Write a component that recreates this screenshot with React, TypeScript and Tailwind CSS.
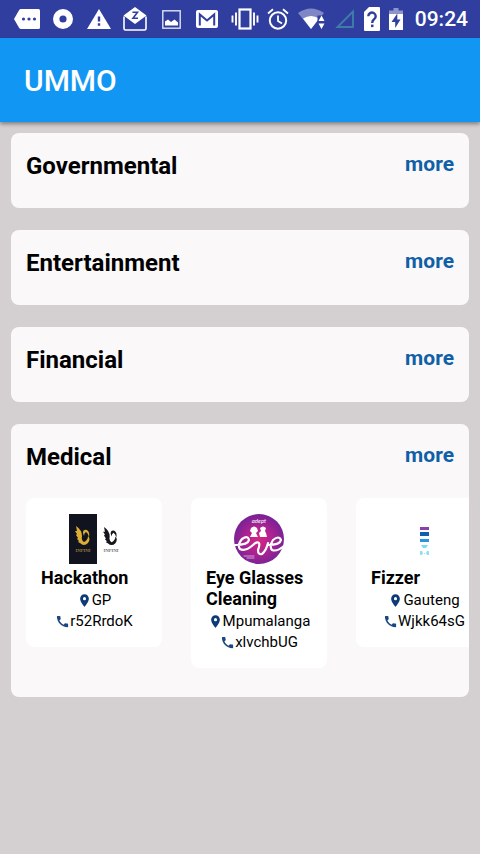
import type { ReactNode } from "react";
import { MdCall, MdLocationOn } from "react-icons/md";

function NotificationIcons() {
  return (
    <div className="flex items-center">
      <span className="flex w-9 justify-center">
        <svg width="26" height="20" viewBox="0 0 26 20" aria-label="More notifications">
          <path d="M7 0H24.500Q26 0 26 1.500V18.500Q26 20 24.500 20H7Q5.800 20 5.200 19L0 10 5.200 1Q5.800 0 7 0Z" fill="#fff" />
          <g fill="#303f9f">
            <circle cx="9.500" cy="10" r="1.600" />
            <circle cx="15" cy="10" r="1.600" />
            <circle cx="20.500" cy="10" r="1.600" />
          </g>
        </svg>
      </span>
      <span className="flex w-9 justify-center">
        <svg width="20" height="20" viewBox="0 0 20 20" aria-label="Recording">
          <circle cx="10" cy="10" r="6.800" fill="none" stroke="#fff" strokeWidth="6.400" />
        </svg>
      </span>
      <span className="flex w-9 justify-center">
        <svg width="24" height="20" viewBox="0 0 24 20" aria-label="Warning">
          <path d="M12 0 24 20H0Z" fill="#fff" />
          <path d="M10.800 7.500h2.400v5h-2.400zM10.800 14.300h2.400v2.400h-2.400z" fill="#303f9f" />
        </svg>
      </span>
      <span className="flex w-9 justify-center">
        <svg width="24" height="24" viewBox="0 0 24 24" aria-label="Mail">
          <path d="M1 9.500V21.500Q1 23 2.500 23H21.500Q23 23 23 21.500V9.500" fill="none" stroke="#fff" strokeWidth="1.600" />
          <path d="M12 0 23.500 8.500 12 17 .5 8.500Z" fill="#fff" />
          <path d="M9.500 5.200h5L10 11.300h5" fill="none" stroke="#303f9f" strokeWidth="1.600" />
        </svg>
      </span>
      <span className="flex w-9 justify-center">
        <svg width="19" height="19" viewBox="0 0 19 19" aria-label="Screenshot">
          <rect x=".8" y=".8" width="17.400" height="17.400" fill="none" stroke="#dfe2f4" strokeWidth="1.400" />
          <path d="M3 15.500v-4l3-2 3 2.500 3.500-2.500 3.500 3v3Z" fill="#fff" />
        </svg>
      </span>
      <span className="flex w-9 justify-center">
        <svg width="22" height="18" viewBox="0 0 22 18" aria-label="Gmail">
          <rect width="22" height="18" rx="2" fill="#fff" />
          <path d="M3.800 15.500V4.500L11 10.500 18.200 4.500V15.500" fill="none" stroke="#303f9f" strokeWidth="2" />
        </svg>
      </span>
    </div>
  );
}

function SystemIcons() {
  return (
    <div className="flex items-center gap-2">
      <svg width="28" height="22" viewBox="0 0 28 22" aria-label="Vibrate">
        <rect x="8.500" y="1.500" width="11" height="19" fill="none" stroke="#fff" strokeWidth="2.200" />
        <path d="M5 4.500v13M23 4.500v13M1.500 7.500v7M26.500 7.500v7" stroke="#fff" strokeWidth="1.900" />
      </svg>
      <svg width="22" height="22" viewBox="0 0 22 22" aria-label="Alarm">
        <circle cx="11" cy="12.500" r="8.200" fill="none" stroke="#fff" strokeWidth="2" />
        <path d="M11 7.500v5.500l4 2.500M1 5.500 6 1.300M21 5.500 16 1.300" fill="none" stroke="#fff" strokeWidth="1.800" />
      </svg>
      <svg width="30" height="22" viewBox="0 0 30 22" aria-label="Wi-Fi">
        <path d="M1 5Q14-4 27 5L14 21Z" fill="#7f88c5" />
        <path d="M6 10.500Q14 5.500 22 10.500L14 21Z" fill="#fff" />
        <path d="M20.500 7.500H29V22h-8.500z" fill="#303f9f" />
        <path d="M24.500 7.500 27.500 13h-6ZM24.500 21 27.500 15.500h-6Z" fill="#fff" />
      </svg>
      <svg width="20" height="20" viewBox="0 0 20 20" aria-label="No signal">
        <path d="M18 2.500V18H2.500Z" fill="none" stroke="#3f7da8" strokeWidth="1.900" />
      </svg>
      <svg width="18" height="24" viewBox="0 0 18 24" aria-label="Unknown SIM card">
        <path d="M6 0H16Q17 0 17 1V23Q17 24 16 24H2Q1 24 1 23V5Z" fill="#fff" />
        <path d="M5.300 9.300a3.700 3.700 0 1 1 5.800 3Q9.200 13.600 9.200 15.900" fill="none" stroke="#303f9f" strokeWidth="2.400" />
        <path d="M8 17.600h2.500v2.500H8z" fill="#303f9f" />
      </svg>
      <svg width="14" height="22" viewBox="0 0 14 22" aria-label="Battery charging">
        <path d="M4.500 0h5v2.500H14V7H0V2.500h4.500Z" fill="#8d95cc" />
        <path d="M0 6h14v16H0z" fill="#fff" />
        <path d="M8.300 5.500 2.500 14h3.700v6L11.500 11.500H8.300Z" fill="#303f9f" />
      </svg>
    </div>
  );
}

function HackathonLogo() {
  const bird = (
    <>
      <path d="M0 0Q6 4 6 10Q5 14 8 16Q12 14 12 10Q15 13 12 17Q8 21 4 17L2 16L3 15L1 13L2 12L0 9L1 8L-1 5L1 5Z" />
      <path d="M7 7Q7 3 11 4Q14 6 13 11Q12 7 10 6Q8 7 8 10Z" />
    </>
  );
  return (
    <svg width="50" height="50" viewBox="0 0 50 50" aria-label="Hackathon logo">
      <rect width="28" height="50" fill="#11131f" />
      <g transform="translate(7 12)" fill="#dcae35">{bird}</g>
      <g transform="translate(35 13) scale(.95)" fill="#17171b">{bird}</g>
      <g fontFamily="Liberation Serif, serif" fontSize="5" textAnchor="middle">
        <text x="14" y="38" fill="#c7a24b">INFINI</text>
        <text x="42" y="38" fill="#333">INFINI</text>
      </g>
    </svg>
  );
}

function EveLogo() {
  return (
    <svg width="52" height="50" viewBox="0 0 52 50" aria-label="Eve logo">
      <defs>
        <radialGradient id="eve-disc" cx=".5" cy=".52" r=".5">
          <stop offset="0" stopColor="#d52682" />
          <stop offset=".5" stopColor="#b02291" />
          <stop offset="1" stopColor="#7b2296" />
        </radialGradient>
      </defs>
      <circle cx="26" cy="25" r="25" fill="url(#eve-disc)" />
      <g fill="#fff">
        <path d="M18 14q3-3 6 0l1 3-2 2 2 4h-8l2-4-2-2ZM27 14q3-3 6 0l-1 3 1 2 1 4h-7l-1-4 2-2Z" />
        <text x="26" y="9" fontFamily="Lato, sans-serif" fontStyle="italic" fontSize="6" textAnchor="middle">adept</text>
      </g>
      <g fill="none" stroke="#fff" strokeWidth="2.200" strokeLinecap="round">
        <path d="M2 31Q15 31 16 26Q15 21 9 25Q4 31 7 35Q12 38 20 31Q24 27 26 29Q27 31 25 36Q25 41 29 40Q33 37 35 29" />
        <path d="M35 31Q47 31 48 26Q46 21 40 26Q36 32 39 36Q44 38 51 32" />
        <path d="M11 42h10M14 44h7" strokeWidth=".6" />
      </g>
    </svg>
  );
}

function FizzerLogo() {
  return (
    <svg width="10" height="50" viewBox="0 0 10 50" aria-label="Fizzer logo">
      <path d="M1 13h9v3H1z" fill="#8b3eae" />
      <path d="M1 18h9v4H1z" fill="#1160ae" />
      <path d="M1 25h9v3H1z" fill="#2b94db" />
      <path d="M2 31h7l-2 3H4z" fill="#7bdcf0" />
      <path d="M1 37h2l1 2-1 2H1zM8 37h2v4H8l-1-2z" fill="#91dff2" />
      <path d="M5 39h1v1H5z" fill="#91dff2" />
    </svg>
  );
}

type Provider = { name: string; place: string; contact: string; logo: ReactNode };
type Category = { title: string; providers: Provider[] };

const categories: Category[] = [
  { title: "Governmental", providers: [] },
  { title: "Entertainment", providers: [] },
  { title: "Financial", providers: [] },
  {
    title: "Medical",
    providers: [
      { name: "Hackathon", place: "GP", contact: "r52RrdoK", logo: <HackathonLogo /> },
      { name: "Eye Glasses Cleaning", place: "Mpumalanga", contact: "xlvchbUG", logo: <EveLogo /> },
      { name: "Fizzer", place: "Gauteng", contact: "Wjkk64sG", logo: <FizzerLogo /> },
    ],
  },
];

function ProviderCard({ name, place, contact, logo }: Provider) {
  return (
    <li className="w-34 shrink-0 rounded-lg bg-white px-[15px] pt-4 pb-[15px]">
      <div className="flex h-[50px] justify-center">{logo}</div>
      <h3 className="mt-[3px] mb-0.5 text-lg leading-[21px] font-bold">{name}</h3>
      <p className="flex items-center justify-center text-[15px] leading-[21px]">
        <MdLocationOn size={15} className="shrink-0 text-[#0d3b78]" />
        {place}
      </p>
      <p className="flex items-center justify-center text-[15px] leading-[21px]">
        <MdCall size={15} className="shrink-0 text-[#1c4680]" />
        {contact}
      </p>
    </li>
  );
}

function CategoryCard({ title, providers }: Category) {
  return (
    <section className="overflow-hidden rounded-lg bg-[#faf8f9] pb-px pl-[15px]">
      <div className="flex items-start justify-between pt-[17px] pr-[15px]">
        <h2 className="text-2xl leading-8 font-bold">{title}</h2>
        <button type="button" className="cursor-pointer text-[21px] leading-7 font-bold text-[#0f60a6]">
          more
        </button>
      </div>
      <div className="pt-[25px]">
        {providers.length > 0 && (
          <ul className="flex items-start gap-[29px] overflow-hidden pb-7">
            {providers.map((provider) => (
              <ProviderCard key={provider.name} {...provider} />
            ))}
          </ul>
        )}
      </div>
    </section>
  );
}

export default function App() {
  return (
    <div className="min-h-screen bg-[#d4cfd0] font-[Roboto,sans-serif] text-black">
      <div className="flex h-[38px] items-center justify-between bg-[#303f9f] pr-3 pl-[9px] text-white">
        <NotificationIcons />
        <div className="flex items-center gap-3">
          <SystemIcons />
          <time className="text-[21px] leading-7 font-medium">09:24</time>
        </div>
      </div>
      <header className="flex h-[84px] items-center bg-[#1197f3] px-6 pt-0.5 shadow-[0_2px_4px_rgba(0,0,0,0.4)]">
        <h1 className="text-3xl font-medium text-white">UMMO</h1>
      </header>
      <main className="flex flex-col gap-[22px] px-[11px] py-[11px]">
        {categories.map((category) => (
          <CategoryCard key={category.title} {...category} />
        ))}
      </main>
    </div>
  );
}
